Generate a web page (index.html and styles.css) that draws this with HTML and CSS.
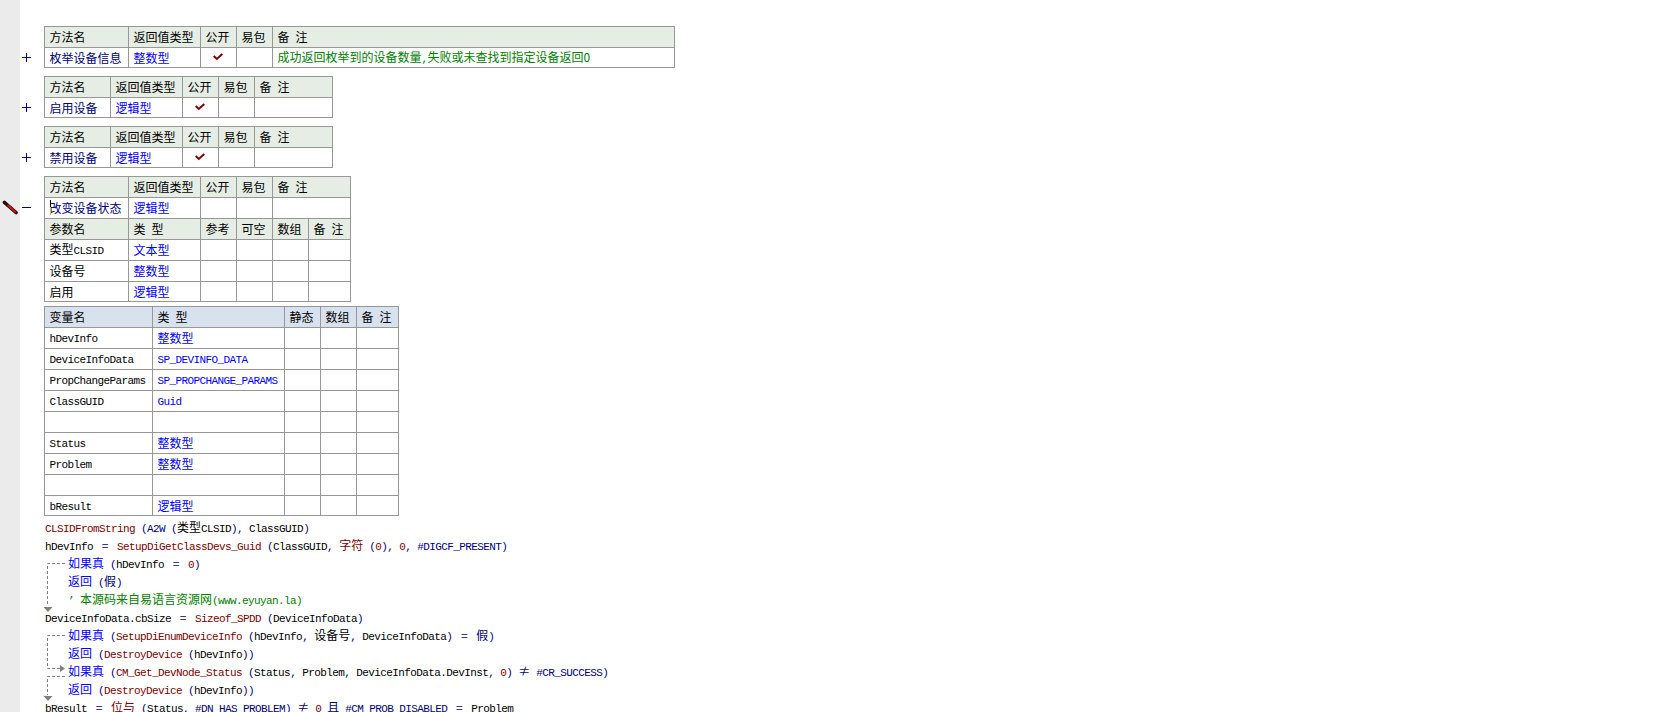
FILE: index.html
```html
<!DOCTYPE html>
<html lang="zh">
<head>
<meta charset="utf-8">
<title>程序集</title>
<link rel="stylesheet" href="styles.css">
</head>
<body>
<div class="page">
  <aside class="rail">
    <svg class="pencil" width="16" height="15" viewBox="0 0 16 15"><path d="M2.5 2.5L14 12.5" stroke="#2a0606" stroke-width="3.6" stroke-linecap="round"/><path d="M5.5 5L14 12.4" stroke="#cc1a1a" stroke-width="1.8"/></svg>
  </aside>
  <main class="sheet">
    <section class="method">
      <div class="fold"><svg class="mark" width="9" height="9" viewBox="0 0 9 9"><path d="M0 4.5H9M4.5 0V9" stroke="#000080"/></svg></div>
      <table class="grid">
        <colgroup><col class="w84"><col class="w72"><col class="w36"><col class="w36"><col class="w402"></colgroup>
        <tr class="head"><td>方法名</td><td>返回值类型</td><td>公开</td><td>易包</td><td>备 注</td></tr>
        <tr class="last"><td class="name">枚举设备信息</td><td class="type">整数型</td><td class="tick"><svg width="10" height="8" viewBox="0 0 10 8"><path d="M0.7 3 L3.8 6 L9.3 1" fill="none" stroke="#800000" stroke-width="2"/></svg></td><td></td><td class="note">成功返回枚举到的设备数量<span class="lat">,</span>失败或未查找到指定设备返回0</td></tr>
      </table>
    </section>
    <section class="method">
      <div class="fold"><svg class="mark" width="9" height="9" viewBox="0 0 9 9"><path d="M0 4.5H9M4.5 0V9" stroke="#000080"/></svg></div>
      <table class="grid">
        <colgroup><col class="w66"><col class="w72"><col class="w36"><col class="w36"><col class="w78"></colgroup>
        <tr class="head"><td>方法名</td><td>返回值类型</td><td>公开</td><td>易包</td><td>备 注</td></tr>
        <tr class="last"><td class="name">启用设备</td><td class="type">逻辑型</td><td class="tick"><svg width="10" height="8" viewBox="0 0 10 8"><path d="M0.7 3 L3.8 6 L9.3 1" fill="none" stroke="#800000" stroke-width="2"/></svg></td><td></td><td></td></tr>
      </table>
    </section>
    <section class="method">
      <div class="fold"><svg class="mark" width="9" height="9" viewBox="0 0 9 9"><path d="M0 4.5H9M4.5 0V9" stroke="#000080"/></svg></div>
      <table class="grid">
        <colgroup><col class="w66"><col class="w72"><col class="w36"><col class="w36"><col class="w78"></colgroup>
        <tr class="head"><td>方法名</td><td>返回值类型</td><td>公开</td><td>易包</td><td>备 注</td></tr>
        <tr class="last"><td class="name">禁用设备</td><td class="type">逻辑型</td><td class="tick"><svg width="10" height="8" viewBox="0 0 10 8"><path d="M0.7 3 L3.8 6 L9.3 1" fill="none" stroke="#800000" stroke-width="2"/></svg></td><td></td><td></td></tr>
      </table>
    </section>
    <section class="method open">
      <div class="fold"><svg class="mark" width="9" height="9" viewBox="0 0 9 9"><path d="M0 4.5H9" stroke="#000080"/></svg></div>
      <table class="grid">
        <colgroup><col class="w84"><col class="w72"><col class="w36"><col class="w36"><col class="w36"><col class="w42"></colgroup>
        <tr class="head"><td>方法名</td><td>返回值类型</td><td>公开</td><td>易包</td><td colspan="2">备 注</td></tr>
        <tr><td class="name caret-cell"><span class="caret"></span>改变设备状态</td><td class="type">逻辑型</td><td></td><td></td><td colspan="2"></td></tr>
        <tr class="head"><td>参数名</td><td>类 型</td><td>参考</td><td>可空</td><td>数组</td><td>备 注</td></tr>
        <tr><td>类型<span class="lat">CLSID</span></td><td class="type">文本型</td><td></td><td></td><td></td><td></td></tr>
        <tr><td>设备号</td><td class="type">整数型</td><td></td><td></td><td></td><td></td></tr>
        <tr class="last"><td>启用</td><td class="type">逻辑型</td><td></td><td></td><td></td><td></td></tr>
      </table>
    </section>
    <section class="vars">
      <table class="grid varlist">
        <colgroup><col class="w108"><col class="w132"><col class="w36"><col class="w36"><col class="w42"></colgroup>
        <tr class="head"><td>变量名</td><td>类 型</td><td>静态</td><td>数组</td><td>备 注</td></tr>
        <tr><td><span class="lat">hDevInfo</span></td><td class="type">整数型</td><td></td><td></td><td></td></tr>
        <tr><td><span class="lat">DeviceInfoData</span></td><td class="type"><span class="lat">SP_DEVINFO_DATA</span></td><td></td><td></td><td></td></tr>
        <tr><td><span class="lat">PropChangeParams</span></td><td class="type"><span class="lat">SP_PROPCHANGE_PARAMS</span></td><td></td><td></td><td></td></tr>
        <tr><td><span class="lat">ClassGUID</span></td><td class="type"><span class="lat">Guid</span></td><td></td><td></td><td></td></tr>
        <tr><td></td><td></td><td></td><td></td><td></td></tr>
        <tr><td><span class="lat">Status</span></td><td class="type">整数型</td><td></td><td></td><td></td></tr>
        <tr><td><span class="lat">Problem</span></td><td class="type">整数型</td><td></td><td></td><td></td></tr>
        <tr><td></td><td></td><td></td><td></td><td></td></tr>
        <tr class="last"><td><span class="lat">bResult</span></td><td class="type">逻辑型</td><td></td><td></td><td></td></tr>
      </table>
    </section>
    <section class="code">
      <svg class="flow" width="30" height="200" viewBox="0 0 30 200">
        <g fill="none" stroke="#808080" stroke-dasharray="3 2">
          <path d="M22 47.5H4.5V90"/>
          <path d="M22 119.5H4.5V152.5H17"/>
          <path d="M22 160.5H4.5V179"/>
        </g>
        <g fill="#808080">
          <path d="M0.5 91H9.5L5 96Z"/>
          <path d="M17 149L22 152.5L17 156Z"/>
          <path d="M0.5 180H9.5L5 185Z"/>
        </g>
      </svg>
      <div class="line"><span class="fn">CLSIDFromString</span> <span class="pn">(A2W (</span><span class="cj">类型</span>CLSID<span class="pn">),</span> ClassGUID<span class="pn">)</span></div>
      <div class="line">hDevInfo <span class="pn cj ne">=</span> <span class="fn">SetupDiGetClassDevs_Guid</span> <span class="pn">(</span>ClassGUID<span class="pn">,</span> <span class="fn cj">字符</span> <span class="pn">(</span><span class="fn">0</span><span class="pn">),</span> <span class="fn">0</span><span class="pn">, #DIGCF_PRESENT)</span></div>
      <div class="line in"><span class="kw cj">如果真</span> <span class="pn">(</span>hDevInfo <span class="pn cj ne">=</span> <span class="fn">0</span><span class="pn">)</span></div>
      <div class="line in"><span class="kw cj">返回</span> <span class="pn">(<span class="cj">假</span>)</span></div>
      <div class="line in"><span class="cm">’ <span class="cj">本源码来自易语言资源网</span>(www.eyuyan.la)</span></div>
      <div class="line">DeviceInfoData.cbSize <span class="pn cj ne">=</span> <span class="fn">Sizeof_SPDD</span> <span class="pn">(</span>DeviceInfoData<span class="pn">)</span></div>
      <div class="line in"><span class="kw cj">如果真</span> <span class="pn">(</span><span class="fn">SetupDiEnumDeviceInfo</span> <span class="pn">(</span>hDevInfo<span class="pn">,</span> <span class="cj">设备号</span><span class="pn">,</span> DeviceInfoData<span class="pn">) <span class="cj ne">=</span> <span class="cj">假</span>)</span></div>
      <div class="line in"><span class="kw cj">返回</span> <span class="pn">(</span><span class="fn">DestroyDevice</span> <span class="pn">(</span>hDevInfo<span class="pn">))</span></div>
      <div class="line in"><span class="kw cj">如果真</span> <span class="pn">(</span><span class="fn">CM_Get_DevNode_Status</span> <span class="pn">(</span>Status<span class="pn">,</span> Problem<span class="pn">,</span> DeviceInfoData.DevInst<span class="pn">,</span> <span class="fn">0</span><span class="pn">) <span class="cj ne">≠</span> #CR_SUCCESS)</span></div>
      <div class="line in"><span class="kw cj">返回</span> <span class="pn">(</span><span class="fn">DestroyDevice</span> <span class="pn">(</span>hDevInfo<span class="pn">))</span></div>
      <div class="line">bResult <span class="pn cj ne">=</span> <span class="fn cj">位与</span> <span class="pn">(</span>Status<span class="pn">, #DN_HAS_PROBLEM) <span class="cj ne">≠</span></span> <span class="fn">0</span> <span class="pn"><span class="cj">且</span> #CM_PROB_DISABLED <span class="cj ne">=</span></span> Problem</div>
    </section>
  </main>
</div>
</body>
</html>
```
FILE: styles.css
```css
* { box-sizing: border-box; }
html, body { margin: 0; height: 100%; overflow: hidden; background: #fff; }
body { font-family: "Noto Sans CJK SC", "Liberation Mono", monospace; font-size: 12px; color: #000; }
.page { display: flex; height: 712px; overflow: hidden; }
.rail { width: 20px; flex: none; background: #ebebeb; position: relative; }
.pencil { position: absolute; left: 2px; top: 200px; }
.sheet { flex: 1; padding-top: 26px; height: 712px; overflow: hidden; }
.method { display: flex; margin-bottom: 8px; }
.open { margin-bottom: 4px; }
.fold { width: 24px; flex: none; padding: 27px 0 0 2px; }
.mark { display: block; }
.vars { padding-left: 24px; }
.grid { border-collapse: separate; border-spacing: 0; table-layout: fixed; border-left: 1px solid #979797; border-top: 1px solid #979797; width: max-content; }
.grid td { height: 21px; padding: 0 0 0 4.5px; border-right: 1px solid #979797; border-bottom: 1px solid #979797; white-space: nowrap; overflow: hidden; line-height: 16px; }
.grid .last td { height: 20px; }
.head td { background: #e6ede4; word-spacing: 3.3px; }
.varlist .head td { background: #d8e2ee; }
.w36 { width: 36px; } .w42 { width: 42px; } .w66 { width: 66px; } .w72 { width: 72px; } .w78 { width: 78px; }
.w84 { width: 84px; } .w108 { width: 108px; } .w132 { width: 132px; } .w402 { width: 402px; }
.lat { font-family: "Liberation Mono", monospace; font-size: 11px; letter-spacing: -0.6px; }
.name { color: #000080; }
.type { color: #0000ff; }
.note { color: #008000; }
.grid .tick { padding: 0 0 0 12px; }
.tick svg { display: block; margin-bottom: 2px; }
.caret-cell { position: relative; }
.caret { position: absolute; left: 5px; top: 2px; width: 1px; height: 15px; background: linear-gradient(#000 50%, #e0c000 50%); }
.code { position: relative; padding: 2px 0 0 25px; font-family: "Liberation Mono", monospace; font-size: 11px; letter-spacing: -0.6px; }
.flow { position: absolute; left: 23px; top: 0; }
.line { height: 18px; line-height: 18px; white-space: pre; }
.line.in { padding-left: 23px; }
.cj { font-family: "Noto Sans CJK SC", sans-serif; font-size: 12px; letter-spacing: 0; }
.ne { display: inline-block; width: 12px; text-align: center; }
.fn { color: #800000; }
.pn { color: #000080; }
.kw { color: #0000ff; }
.cm { color: #008000; }
```
